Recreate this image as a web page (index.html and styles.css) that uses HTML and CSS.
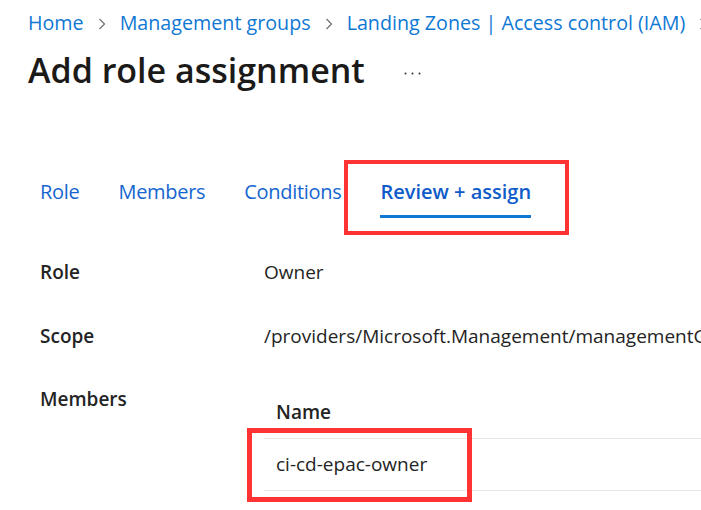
FILE: index.html
```html
<!DOCTYPE html>
<html>
<head>
<meta charset="utf-8">
<link rel="stylesheet" href="styles.css">
</head>
<body>
<div class="page">
  <nav class="crumbs">
    <a class="crumb">Home</a>
    <svg class="chev" viewBox="0 0 8 12"><path d="M1.5 1 L6.5 6 L1.5 11" fill="none" stroke="#707070" stroke-width="1.2"/></svg>
    <a class="crumb">Management groups</a>
    <svg class="chev" viewBox="0 0 8 12"><path d="M1.5 1 L6.5 6 L1.5 11" fill="none" stroke="#707070" stroke-width="1.2"/></svg>
    <a class="crumb">Landing Zones | Access control (IAM)</a>
    <svg class="chev" viewBox="0 0 8 12"><path d="M1.5 1 L6.5 6 L1.5 11" fill="none" stroke="#707070" stroke-width="1.2"/></svg>
  </nav>
  <div class="titlebar">
    <h1 class="title">Add role assignment</h1>
    <svg class="more" viewBox="0 0 17 3"><circle cx="1.5" cy="1.5" r="1" fill="#323130"/><circle cx="8.5" cy="1.5" r="1" fill="#323130"/><circle cx="15.5" cy="1.5" r="1" fill="#323130"/></svg>
  </div>
  <div class="tabs">
    <span class="tab">Role</span>
    <span class="tab">Members</span>
    <span class="tab">Conditions</span>
    <span class="tab active">Review + assign</span>
  </div>
  <div class="details">
    <div class="row">
      <div class="label">Role</div>
      <div class="value">Owner</div>
    </div>
    <div class="row">
      <div class="label">Scope</div>
      <div class="value">/providers/Microsoft.Management/managementGroups/landing-zones</div>
    </div>
    <div class="row members">
      <div class="label">Members</div>
      <div class="value table">
        <div class="th">Name</div>
        <div class="td">ci-cd-epac-owner</div>
      </div>
    </div>
  </div>
</div>
</body>
</html>
```

FILE: styles.css
```css
html, body {
  margin: 0;
  padding: 0;
  background: #ffffff;
  overflow: hidden;
}
body {
  width: 701px;
  height: 510px;
  font-family: "Open Sans", "Noto Sans", sans-serif;
  color: #242424;
}
.page {
  padding-left: 28px;
}
.crumbs {
  display: flex;
  align-items: center;
  gap: 14px;
  height: 24px;
  line-height: 24px;
  padding-top: 11px;
  white-space: nowrap;
}
.crumb {
  color: #0f78d4;
  font-size: 19.7px;
}
.chev {
  width: 8px;
  height: 12px;
  flex: none;
  margin-top: 1px;
}
.titlebar {
  display: flex;
  align-items: center;
  margin-top: 13px;
  height: 44px;
}
.title {
  margin: 0;
  font-size: 34px;
  line-height: 44px;
  font-weight: 600;
  color: #1b1a19;
}
.more {
  width: 17px;
  height: 3px;
  margin-left: 39px;
  margin-top: 6px;
  flex: none;
}
.tabs {
  display: flex;
  gap: 39px;
  margin-top: 88px;
  padding-left: 12px;
  height: 38px;
}
.tab {
  font-size: 20px;
  line-height: 24px;
  color: #1565d0;
  letter-spacing: -0.3px;
  height: 38px;
  position: relative;
}
.tab.active {
  font-weight: 600;
  color: #0f5bc9;
  letter-spacing: 0;
}
.tab.active::after {
  content: "";
  position: absolute;
  left: 0;
  right: 0;
  bottom: 0;
  height: 3px;
  background: #0f78d4;
}
.tab.active::before {
  content: "";
  position: absolute;
  left: -36px;
  top: -20px;
  width: 225px;
  height: 75px;
  box-sizing: border-box;
  border: 4px solid #ff3333;
}
.details {
  padding-left: 12px;
  margin-top: 42px;
}
.row {
  display: flex;
  height: 63.5px;
  font-size: 19px;
  line-height: 24px;
}
.label {
  width: 224px;
  flex: none;
  font-weight: 600;
  color: #242424;
}
.value {
  white-space: nowrap;
  overflow: hidden;
}
.table {
  flex: 1;
  padding-top: 13px;
}
.th {
  font-weight: 600;
  padding-left: 12px;
  height: 38px;
}
.td {
  border-top: 1px solid #e8e8e8;
  border-bottom: 1px solid #e8e8e8;
  padding-left: 12px;
  height: 51px;
  line-height: 51px;
  position: relative;
}
.td::before {
  content: "";
  position: absolute;
  left: -17px;
  top: -11px;
  width: 225px;
  height: 74px;
  box-sizing: border-box;
  border: 5px solid #ff3333;
}
.members .value {
  overflow: visible;
}
```
